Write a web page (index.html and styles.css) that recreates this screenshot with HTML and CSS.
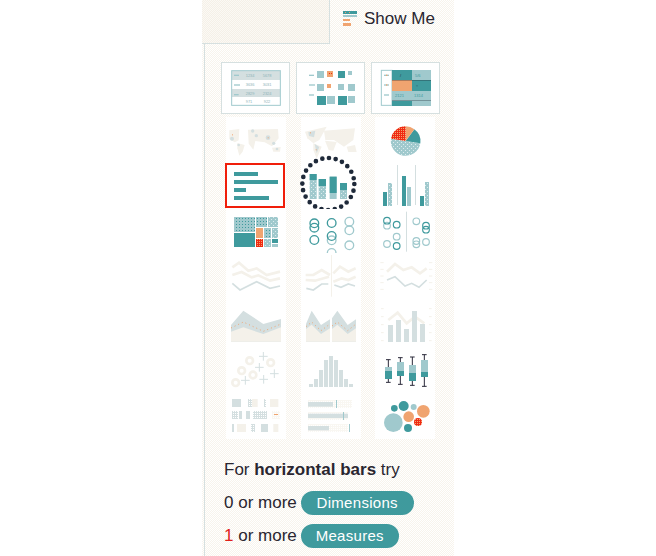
FILE: index.html
```html
<!DOCTYPE html>
<html>
<head>
	<meta charset="UTF-8">
	<title>Show Me</title>
	<link rel="stylesheet" href="styles.css">
</head>
<body>
<div class="panel">
	<div class="head">
		<div class="field"></div>
		<div class="show">
			<svg class="show-icon" viewBox="0 0 14 15">
				<rect class="t" x="0" y="0" width="14" height="3"/>
				<rect class="o" x="2" y="1" width="1" height="1"/>
				<rect class="o" x="6" y="1" width="1" height="1"/>
				<rect class="fill-dl" x="0" y="4" width="14" height="2"/>
				<rect class="o" x="0" y="8" width="7" height="2"/>
				<rect class="o" x="0" y="12" width="8" height="3"/>
			</svg>
			<span>Show Me</span>
		</div>
	</div>

	<div class="main">
		<div class="cards">
			<div class="card">
				<svg class="thumb" viewBox="66 189 201 150">
					<defs>
						<pattern id="dl" width="12" height="12" patternUnits="userSpaceOnUse"><rect class="l" width="12" height="12"/><rect fill="#dcecee" width="3" height="3"/><rect fill="#dcecee" x="6" y="6" width="3" height="3"/></pattern>
						<pattern id="dt" width="9" height="9" patternUnits="userSpaceOnUse"><rect class="l" width="9" height="9"/><rect class="t" width="3" height="3"/></pattern>
						<pattern id="dr" width="6" height="6" patternUnits="userSpaceOnUse"><rect fill="#f02a12" width="6" height="6"/><rect class="o" width="3" height="3"/></pattern>
						<pattern id="dg" width="6" height="6" patternUnits="userSpaceOnUse"><rect class="g" width="6" height="6"/><rect fill="#fff" width="3" height="3"/></pattern>
						<pattern id="dc" width="6" height="6" patternUnits="userSpaceOnUse"><rect fill="#f9f7f2" width="6" height="6"/><rect fill="#fff" width="3" height="3"/></pattern>
					</defs>
					<rect class="g" x="96" y="213" width="144" height="27"/>
					<rect class="g" x="96" y="267" width="144" height="24"/>
					<rect class="frame" x="95" y="212" width="146" height="104"/>
					<rect class="l" x="102" y="224" width="15" height="4"/>
					<rect class="l" x="102" y="253" width="18" height="4"/>
					<rect class="l" x="102" y="282" width="14" height="4"/>
					<text class="num" x="137" y="232">1234</text>
					<text class="num" x="188" y="232">5678</text>
					<text class="num" x="137" y="259">3636</text>
					<text class="num" x="188" y="259">3031</text>
					<text class="num" x="137" y="286">2829</text>
					<text class="num" x="188" y="286">2324</text>
					<text class="num" x="137" y="310">971</text>
					<text class="num" x="191" y="310">922</text>
				</svg>
			</div>
			<div class="card">
				<svg class="thumb" viewBox="291 189 201 150">
					<rect class="l" x="327" y="224" width="15" height="4"/>
					<rect class="l" x="327" y="253" width="18" height="4"/>
					<rect class="l" x="327" y="283" width="15" height="4"/>
					<rect class="l" x="351" y="213" width="21" height="21"/>
					<rect class="o" x="381" y="213" width="18" height="18"/>
					<rect fill="#f02a12" x="387" y="219" width="3" height="3"/>
					<rect fill="#f02a12" x="393" y="219" width="3" height="3"/>
					<rect class="t" x="414" y="213" width="21" height="21"/>
					<rect class="l" x="444" y="213" width="12" height="12"/>
					<rect class="l" x="351" y="252" width="21" height="21"/>
					<rect class="o" x="381" y="252" width="12" height="12"/>
					<rect class="l" x="414" y="252" width="18" height="18"/>
					<rect class="l" x="444" y="252" width="21" height="21"/>
					<rect class="t" x="351" y="288" width="27" height="27"/>
					<rect class="l" x="381" y="288" width="24" height="24"/>
					<rect class="t" x="414" y="288" width="27" height="27"/>
					<rect class="l" x="444" y="288" width="21" height="21"/>
				</svg>
			</div>
			<div class="card">
				<svg class="thumb" viewBox="516 189 201 150">
					<rect class="frame" x="544" y="211" width="32" height="105"/>
					<rect class="l" x="552" y="224" width="15" height="4"/>
					<rect class="o" x="558" y="224" width="4" height="4"/>
					<rect class="l" x="552" y="253" width="15" height="4"/>
					<rect class="o" x="558" y="253" width="4" height="4"/>
					<rect class="l" x="552" y="283" width="15" height="4"/>
					<rect class="t" x="576" y="210" width="60" height="30"/>
					<rect class="l" x="636" y="210" width="57" height="30"/>
					<rect class="o" x="576" y="240" width="60" height="33"/>
					<rect class="t" x="636" y="240" width="57" height="33"/>
					<rect class="l" x="576" y="273" width="60" height="30"/>
					<rect class="l" x="636" y="273" width="57" height="30"/>
					<rect class="t" x="576" y="303" width="60" height="15"/>
					<rect class="l" x="636" y="303" width="57" height="15"/>
					<rect class="d" x="576" y="240" width="117" height="1"/>
					<rect class="d" x="576" y="302" width="117" height="1"/>
					<text class="num dark" x="600" y="230">/</text>
					<text class="num tealish" x="645" y="230">5/6</text>
					<text class="num dark" x="648" y="260">::</text>
					<text class="num tealish" x="585" y="292">2121</text>
					<text class="num tealish" x="642" y="292">1314</text>
				</svg>
			</div>
		</div>

		<div class="charts">
			<!-- symbol map -->
			<div class="cell">
				<svg class="chart" viewBox="12 6 180 138">
					<path class="c" d="M22 46 L52 42 L50 76 L38 82 L22 72 Z"/>
					<path class="c" d="M46 84 L68 90 L62 110 L52 122 L46 100 Z"/>
					<path class="c" d="M78 44 L168 42 L170 70 L150 94 L128 82 L100 78 L94 104 L80 86 Z"/>
					<path class="c" d="M150 98 L176 96 L174 110 L154 110 Z"/>
					<circle class="g" cx="30" cy="71" r="6"/>
					<circle class="g" cx="92" cy="48" r="5"/>
					<circle class="g" cx="103" cy="62" r="5"/>
					<circle class="g" cx="138" cy="68" r="7"/>
					<circle class="g" cx="155" cy="85" r="5"/>
					<circle class="g" cx="50" cy="90" r="4"/>
					<circle class="g" cx="165" cy="102" r="4"/>
					<rect class="o" x="30" y="58" width="3" height="3"/>
					<rect class="o" x="137" y="67" width="3" height="3"/>
				</svg>
			</div>
			<!-- filled map -->
			<div class="cell">
				<svg class="chart" viewBox="303 351 180 138">
					<path class="c" d="M315 395 L380 380 L358 420 L340 430 L322 415 Z"/>
					<path class="c" d="M340 430 L365 440 L350 476 L340 450 Z"/>
					<path class="c" d="M372 392 L465 385 L460 420 L432 440 L402 420 L376 420 Z"/>
					<path class="c" d="M375 422 L410 426 L400 452 L386 450 Z"/>
					<path class="c" d="M440 440 L465 435 L470 456 L445 456 Z"/>
					<path class="g" d="M325 397 L346 392 L342 412 L327 408 Z"/>
					<path class="g" d="M344 432 L358 441 L350 460 Z"/>
					<rect class="o" x="330" y="397" width="3" height="3"/>
					<rect class="o" x="347" y="448" width="3" height="3"/>
				</svg>
			</div>
			<!-- pie -->
			<div class="cell">
				<svg class="chart" viewBox="528 351 180 138">
					<path class="fill-dl" d="M620 423 L664 430 A44 44 0 0 1 576 416 Z"/>
					<path class="t" d="M620 423 L646 388 A44 44 0 0 1 664 430 Z"/>
					<path class="o" d="M620 423 L620 379 A44 44 0 0 1 646 388 Z"/>
					<path class="fill-dr" d="M620 423 L576 416 A44 44 0 0 1 620 379 Z"/>
				</svg>
			</div>

			<!-- horizontal bars, selected -->
			<div class="cell">
				<svg class="chart" viewBox="33 24 180 138">
					<rect class="t" x="57" y="51" width="72" height="12"/>
					<rect class="t" x="57" y="75" width="132" height="12"/>
					<rect class="t" x="57" y="99" width="36" height="12"/>
					<rect class="t" x="57" y="123" width="105" height="12"/>
					<rect class="picked" x="33" y="27" width="174" height="129"/>
				</svg>
			</div>
			<!-- stacked bars with the suggested mark -->
			<div class="cell">
				<svg class="chart" viewBox="258 24 180 138">
					<rect class="fill-dl" x="284" y="57" width="21" height="75"/>
					<rect class="t" x="284" y="57" width="21" height="18"/>
					<rect class="fill-dl" x="311" y="72" width="22" height="60"/>
					<rect class="t" x="311" y="72" width="22" height="21"/>
					<rect class="l" x="344" y="65" width="21" height="67"/>
					<rect class="t" x="344" y="65" width="21" height="49"/>
					<rect class="fill-dl" x="375" y="84" width="21" height="48"/>
					<rect class="t" x="375" y="84" width="21" height="21"/>
					<circle class="ring" cx="340" cy="87" r="78"/>
				</svg>
			</div>
			<!-- side by side bars -->
			<div class="cell">
				<svg class="chart" viewBox="480 24 180 138">
					<rect class="g" x="546" y="30" width="3" height="120"/>
					<rect class="g" x="600" y="30" width="3" height="120"/>
					<rect class="t" x="504" y="111" width="12" height="42"/>
					<rect class="fill-dl" x="519" y="84" width="12" height="69"/>
					<rect class="t" x="561" y="63" width="12" height="90"/>
					<rect class="l" x="576" y="96" width="12" height="57"/>
					<rect class="t" x="615" y="123" width="12" height="30"/>
					<rect class="fill-dl" x="630" y="81" width="12" height="72"/>
				</svg>
			</div>

			<!-- treemap -->
			<div class="cell">
				<svg class="chart" viewBox="33 162 180 138">
					<rect class="fill-dt" x="57" y="186" width="63" height="45"/>
					<rect class="t" x="57" y="234" width="63" height="42"/>
					<rect class="fill-dt" x="123" y="186" width="33" height="30"/>
					<rect class="fill-dl" x="159" y="186" width="30" height="30"/>
					<rect class="o" x="123" y="219" width="21" height="30"/>
					<rect class="fill-dr" x="123" y="252" width="21" height="24"/>
					<rect class="fill-dt" x="147" y="219" width="21" height="30"/>
					<rect class="fill-dl" x="171" y="219" width="18" height="30"/>
					<rect class="fill-dl" x="147" y="252" width="21" height="24"/>
					<rect class="t" x="171" y="252" width="18" height="12"/>
					<rect class="l" x="171" y="267" width="18" height="9"/>
				</svg>
			</div>
			<!-- circle views -->
			<div class="cell">
				<svg class="chart" viewBox="258 162 180 138">
					<circle class="ol" cx="403" cy="200" r="13"/>
					<circle class="ol" cx="403" cy="226" r="13"/>
					<circle class="ol" cx="403" cy="271" r="13"/>
					<circle class="ot" cx="298" cy="205" r="13"/>
					<circle class="ot" cx="298" cy="218" r="13"/>
					<circle class="ot" cx="350" cy="204" r="13"/>
					<circle class="ot" cx="298" cy="255" r="13"/>
					<circle class="ol" cx="350" cy="256" r="13"/>
					<circle class="ot" cx="350" cy="243" r="13"/>
					<path class="ol" d="M337 294 A13 13 0 0 1 363 294"/>
				</svg>
			</div>
			<!-- side by side circles -->
			<div class="cell">
				<svg class="chart" viewBox="480 162 180 138">
					<rect class="g" x="573" y="170" width="3" height="120"/>
					<circle class="ol thin" cx="516" cy="212" r="10"/>
					<circle class="ot thin" cx="516" cy="197" r="10"/>
					<circle class="ot thin" cx="545" cy="209" r="10"/>
					<circle class="ol thin" cx="545" cy="245" r="10"/>
					<circle class="ol thin" cx="516" cy="267" r="10"/>
					<circle class="ot thin" cx="545" cy="273" r="10"/>
					<circle class="ol thin" cx="604" cy="199" r="10"/>
					<circle class="ot thin" cx="633" cy="212" r="10"/>
					<circle class="ot thin" cx="633" cy="224" r="10"/>
					<circle class="ol thin" cx="604" cy="258" r="10"/>
					<circle class="ol thin" cx="604" cy="268" r="10"/>
					<circle class="ol thin" cx="633" cy="261" r="10"/>
				</svg>
			</div>

			<!-- lines, continuous -->
			<div class="cell">
				<svg class="chart" viewBox="33 -15 180 138">
					<polyline class="lc" points="52,22 72,8 100,32 125,25 155,45 195,35"/>
					<polyline class="lc" points="52,45 80,36 110,52 130,46 165,62 195,55"/>
					<polyline class="lg" points="52,70 75,90 125,65 165,85 195,78"/>
				</svg>
			</div>
			<!-- lines, discrete -->
			<div class="cell">
				<svg class="chart" viewBox="258 -15 180 138">
					<rect class="c" x="348" y="-15" width="3" height="125"/>
					<polyline class="lc" points="272,45 295,45 320,30 345,45"/>
					<polyline class="lc" points="272,60 300,62 342,50"/>
					<polyline class="lg" points="274,85 295,90 320,72 340,72"/>
					<polyline class="lc" points="355,40 375,20 400,35 422,25"/>
					<polyline class="lc" points="355,65 380,55 400,60 422,50"/>
					<polyline class="lg" points="358,75 378,82 400,72 420,78"/>
				</svg>
			</div>
			<!-- dual lines -->
			<div class="cell">
				<svg class="chart" viewBox="480 -15 180 138">
					<polyline class="lc" points="516,35 540,12 565,30 590,22 615,40 635,25"/>
					<polyline class="lg" points="516,60 540,50 570,78 590,70 612,82 635,60"/>
					<path class="ticks" d="M496 8 H506 M496 28 H506 M496 48 H506 M496 68 H506 M496 88 H506 M642 8 H652 M642 28 H652 M642 48 H652 M642 68 H652 M642 88 H652"/>
				</svg>
			</div>

			<!-- area, continuous -->
			<div class="cell">
				<svg class="chart" viewBox="33 123 180 138">
					<polygon class="g" points="48,195 85,152 145,192 198,177 198,245 48,245"/>
					<polygon class="c" points="48,215 85,202 145,222 198,202 198,245 48,245"/>
					<polyline class="spots" points="48,204 85,186 145,214 198,192"/>
				</svg>
			</div>
			<!-- area, discrete -->
			<div class="cell">
				<svg class="chart" viewBox="258 123 180 138">
					<polygon class="g" points="273,192 290,152 318,195 345,178 345,245 273,245"/>
					<polygon class="c" points="273,207 290,194 318,222 345,205 345,245 273,245"/>
					<polyline class="spots" points="273,200 290,186 318,212 345,192"/>
					<polygon class="g" points="351,175 367,152 398,195 423,178 423,245 351,245"/>
					<polygon class="c" points="351,207 367,194 398,222 423,205 423,245 351,245"/>
					<polyline class="spots" points="351,198 367,186 398,212 423,192"/>
				</svg>
			</div>
			<!-- dual combination -->
			<div class="cell">
				<svg class="chart" viewBox="480 123 180 138">
					<polyline class="lc" points="520,180 548,158 575,190 600,170 628,190"/>
					<rect class="g" x="519" y="195" width="15" height="51"/>
					<rect class="g" x="543" y="180" width="15" height="66"/>
					<rect class="g" x="567" y="207" width="15" height="39"/>
					<rect class="g" x="591" y="153" width="15" height="93"/>
					<rect class="g" x="615" y="192" width="15" height="54"/>
					<path class="ticks" d="M498 146 H506 M498 170 H506 M498 194 H506 M498 218 H506 M498 242 H506 M642 146 H650 M642 170 H650 M642 194 H650 M642 218 H650 M642 242 H650"/>
				</svg>
			</div>

			<!-- scatter -->
			<div class="cell">
				<svg class="chart" viewBox="33 6 180 138">
					<circle class="gear" cx="104" cy="47" r="10"/>
					<circle class="gear" cx="80" cy="77" r="10"/>
					<circle class="gear" cx="114" cy="90" r="10"/>
					<circle class="gear" cx="62" cy="113" r="10"/>
					<circle class="gear" cx="167" cy="53" r="10"/>
					<path class="plus" d="M132 34 H158 M145 21 V47 M120 67 H146 M133 54 V80 M165 86 H191 M178 73 V99 M78 106 H104 M91 93 V119 M133 103 H159 M146 90 V116"/>
				</svg>
			</div>
			<!-- histogram -->
			<div class="cell">
				<svg class="chart" viewBox="258 6 180 138">
					<rect class="g" x="282" y="117" width="12" height="9"/>
					<rect class="g" x="297" y="102" width="12" height="24"/>
					<rect class="g" x="312" y="75" width="12" height="51"/>
					<rect class="g" x="327" y="45" width="12" height="81"/>
					<rect class="g" x="342" y="33" width="12" height="93"/>
					<rect class="g" x="357" y="45" width="12" height="81"/>
					<rect class="g" x="372" y="75" width="12" height="51"/>
					<rect class="g" x="387" y="102" width="12" height="24"/>
					<rect class="g" x="402" y="117" width="12" height="9"/>
				</svg>
			</div>
			<!-- box plot -->
			<div class="cell">
				<svg class="chart" viewBox="480 6 180 138">
					<path class="whisk" d="M513 44 H527 M520 44 V112 M513 112 H527 M549 38 H563 M556 38 V118 M549 118 H563 M585 36 H599 M592 36 V121 M585 121 H599 M621 29 H635 M628 29 V124 M621 124 H635"/>
					<rect class="l" x="510" y="66" width="21" height="12"/>
					<rect class="t" x="510" y="78" width="21" height="24"/>
					<rect class="l" x="546" y="51" width="21" height="27"/>
					<rect class="t" x="546" y="78" width="21" height="15"/>
					<rect class="l" x="582" y="60" width="21" height="24"/>
					<rect class="t" x="582" y="84" width="21" height="24"/>
					<rect class="l" x="618" y="45" width="21" height="36"/>
					<rect class="t" x="618" y="81" width="21" height="15"/>
				</svg>
			</div>

			<!-- gantt style blocks -->
			<div class="cell">
				<svg class="chart" viewBox="33 144 180 138">
					<rect class="g" x="51" y="162" width="27" height="24"/>
					<rect class="fill-dg" x="99" y="162" width="12" height="24"/>
					<rect class="c" x="111" y="162" width="17" height="24"/>
					<rect class="fill-dg" x="147" y="162" width="6" height="24"/>
					<rect class="c" x="165" y="162" width="25" height="24"/>
					<rect class="fill-dg" x="51" y="198" width="18" height="24"/>
					<rect class="g" x="72" y="198" width="9" height="24"/>
					<rect class="g" x="93" y="198" width="12" height="24"/>
					<rect class="fill-dg" x="114" y="198" width="42" height="24"/>
					<rect class="fill-dc" x="171" y="198" width="24" height="24"/>
					<rect class="o" x="177" y="207" width="12" height="3"/>
					<rect class="g" x="51" y="237" width="6" height="24"/>
					<rect class="c" x="66" y="237" width="27" height="24"/>
					<rect class="fill-dg" x="108" y="237" width="12" height="24"/>
					<rect class="g" x="138" y="237" width="21" height="24"/>
					<rect class="c" x="175" y="237" width="15" height="24"/>
				</svg>
			</div>
			<!-- bullet graph -->
			<div class="cell">
				<svg class="chart" viewBox="258 144 180 138">
					<rect class="fill-dc" x="279" y="165" width="132" height="24"/>
					<rect class="g" x="279" y="171" width="75" height="14"/>
					<rect class="l" x="363" y="165" width="3" height="24"/>
					<rect class="fill-dc" x="279" y="201" width="120" height="24"/>
					<rect class="g" x="279" y="206" width="120" height="13"/>
					<rect class="l" x="384" y="201" width="3" height="24"/>
					<rect class="fill-dc" x="279" y="237" width="120" height="24"/>
					<rect class="g" x="279" y="243" width="63" height="13"/>
					<rect class="l" x="402" y="237" width="3" height="24"/>
				</svg>
			</div>
			<!-- bubbles -->
			<div class="cell">
				<svg class="chart" viewBox="480 144 180 138">
					<circle class="t" cx="538" cy="190" r="10"/>
					<circle class="t" cx="566" cy="183" r="15"/>
					<circle class="l" cx="596" cy="186" r="9"/>
					<circle class="o" cx="625" cy="199" r="19"/>
					<circle class="l" cx="535" cy="233" r="28"/>
					<circle class="o" cx="581" cy="215" r="16"/>
					<circle class="fill-dr" cx="609" cy="231" r="12"/>
					<circle class="t" cx="579" cy="249" r="12"/>
				</svg>
			</div>
		</div>

		<div class="hints">
			<div class="hint">For <b>horizontal bars</b> try</div>
			<div class="hint hint-pill"><span>0 or more</span><span class="pill pill-dim">Dimensions</span></div>
			<div class="hint hint-pill"><span><span class="need">1</span> or more</span><span class="pill pill-mea">Measures</span></div>
		</div>
	</div>
</div>
</body>
</html>
```

FILE: styles.css
```css
body {
	margin: 0;
	background: #fff;
	color: #2a2630;
	font-family: "Liberation Sans", Arial, sans-serif;
}

.panel {
	width: 252px;
	height: 556px;
	margin-left: 202px;
	overflow: hidden;
	background-color: #fdfcfa;
	background-image: repeating-conic-gradient(#f8f4ec 0 25%, #fff 0 50%);
	background-size: 2px 2px;
}

.head {
	display: flex;
	height: 44px;
}
.field {
	box-sizing: border-box;
	width: 128px;
	height: 44px;
	border-right: 1px solid #d6e0e0;
	border-bottom: 1px solid #d6e0e0;
	background-image: repeating-conic-gradient(#f5f0e7 0 25%, #fbf9f5 0 50%);
	background-size: 2px 2px;
}
.show {
	display: flex;
	align-items: center;
	gap: 7px;
	margin-left: 13px;
	margin-top: -7px;
	font-size: 17px;
}
.show-icon {
	display: block;
	width: 14px;
	height: 15px;
}

.main {
	box-sizing: border-box;
	height: 512px;
	margin-left: 2px;
	padding-left: 16px;
	border-left: 1px solid #d6e0e0;
}

.cards {
	display: flex;
	gap: 6px;
	padding-top: 18px;
}
.card {
	box-sizing: border-box;
	width: 69px;
	height: 52px;
	border: 1px solid #d6e0e0;
	background: #fff;
}
.thumb {
	display: block;
	width: 67px;
	height: 50px;
}

.charts {
	display: grid;
	grid-template-columns: 75px 74px 60px;
	grid-auto-rows: 46px;
	margin: 3px 0 0 5px;
}
.cell {
	width: 60px;
	background: #fff;
}
.chart {
	display: block;
	width: 60px;
	height: 46px;
	overflow: visible;
}

/* chart colours */
.t { fill: #3f9a9d; }
.l { fill: #a0c9cd; }
.o { fill: #f0a470; }
.g { fill: #d4dfe0; }
.c { fill: #f4f1ea; }
.d { fill: #1f2a36; }
.fill-dl { fill: url(#dl); }
.fill-dt { fill: url(#dt); }
.fill-dr { fill: url(#dr); }
.fill-dg { fill: url(#dg); }
.fill-dc { fill: url(#dc); }

.frame { fill: none; stroke: #a0c9cd; stroke-width: 3; }
.num { font-size: 12px; fill: #8fb5b9; font-family: "Liberation Sans", Arial, sans-serif; }
.dark { fill: #1f2a36; }
.tealish { fill: #3f9a9d; }
.picked { fill: none; stroke: #f01e0a; stroke-width: 6; }
.ring { fill: none; stroke: #1f2a3a; stroke-width: 14; stroke-linecap: round; stroke-dasharray: 0 20.4; }
.ot { fill: none; stroke: #3f9a9d; stroke-width: 4; }
.ol { fill: none; stroke: #a0c9cd; stroke-width: 4; }
.thin { stroke-width: 3.5; }
.lc { fill: none; stroke: #f4f1ea; stroke-width: 8; }
.lg { fill: none; stroke: #d4dfe0; stroke-width: 5; }
.ticks { fill: none; stroke: #f4f1ea; stroke-width: 3; }
.spots { fill: none; stroke: #f0a470; stroke-width: 3; stroke-dasharray: 3 9; }
.gear { fill: none; stroke: #f4f1ea; stroke-width: 8; }
.plus { fill: none; stroke: #d4dfe0; stroke-width: 3; }
.whisk { fill: none; stroke: #2b2a3a; stroke-width: 3; }

.hints {
	margin: 14px 0 0 3px;
	font-size: 17px;
}
.hint {
	height: 33px;
	line-height: 33px;
}
.hint-pill {
	display: flex;
	align-items: center;
	gap: 4px;
}
.need {
	color: #e0201a;
}
.pill {
	box-sizing: border-box;
	height: 24px;
	line-height: 24px;
	border-radius: 12px;
	background: #3f9a9d;
	color: #fff;
	font-size: 15px;
	text-align: center;
	letter-spacing: 0.3px;
}
.pill-dim { width: 113px; }
.pill-mea { width: 98px; }
```
